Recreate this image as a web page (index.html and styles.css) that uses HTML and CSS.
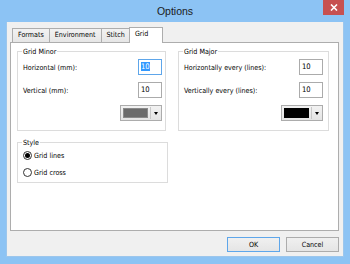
FILE: index.html
```html
<!DOCTYPE html>
<html>
<head>
<meta charset="utf-8">
<title>Options</title>
<link rel="stylesheet" href="styles.css">
</head>
<body>
<div class="window">
  <div class="titlebar">
    <span></span>
    <span class="title">Options</span>
    <span class="close"><svg width="8" height="7" viewBox="0 0 8 7"><path d="M1 0.5 L7 6.5 M7 0.5 L1 6.5" stroke="#fff" stroke-width="1.6"/></svg></span>
  </div>
  <div class="client">
    <div class="tabs">
      <div class="tab">Formats</div>
      <div class="tab">Environment</div>
      <div class="tab">Stitch</div>
      <div class="tab active">Grid</div>
    </div>
    <div class="panel">
      <div class="col">
        <fieldset class="group minor">
          <legend>Grid Minor</legend>
          <div class="body">
            <div class="row"><span class="label">Horizontal (mm):</span><span class="input focused"><span class="sel">10</span></span></div>
            <div class="row"><span class="label">Vertical (mm):</span><span class="input">10</span></div>
            <div class="row end"><span class="combo"><span class="swatch gray"></span><span class="sep"></span><span class="arrow"></span></span></div>
          </div>
        </fieldset>
        <fieldset class="group style">
          <legend>Style</legend>
          <div class="radios">
            <div class="radio-row"><span class="radio checked"></span><span>Grid lines</span></div>
            <div class="radio-row"><span class="radio"></span><span>Grid cross</span></div>
          </div>
        </fieldset>
      </div>
      <div class="col">
        <fieldset class="group major">
          <legend>Grid Major</legend>
          <div class="body">
            <div class="row"><span class="label">Horizontally every (lines):</span><span class="input">10</span></div>
            <div class="row"><span class="label">Vertically every (lines):</span><span class="input">10</span></div>
            <div class="row end"><span class="combo"><span class="swatch black"></span><span class="sep"></span><span class="arrow"></span></span></div>
          </div>
        </fieldset>
      </div>
    </div>
    <div class="buttons">
      <span class="btn default">OK</span>
      <span class="btn">Cancel</span>
    </div>
  </div>
</div>
</body>
</html>
```
FILE: styles.css
```css
* { box-sizing: border-box; }
html, body { margin: 0; padding: 0; }
body {
  width: 350px;
  height: 264px;
  overflow: hidden;
  font-family: "DejaVu Sans Condensed", "Liberation Sans", Arial, sans-serif;
  font-size: 7.1px;
  color: #000;
}
.window {
  width: 350px;
  height: 264px;
  background: #8cc3f4;
  padding: 0 6px 7px 6px;
  display: flex;
  flex-direction: column;
}
.titlebar {
  height: 22px;
  flex: none;
  display: grid;
  grid-template-columns: 1fr auto 1fr;
}
.title {
  font-family: "Liberation Sans", Arial, sans-serif;
  font-size: 10.5px;
  line-height: 23px;
  color: #1a1a1a;
}
.close {
  justify-self: end;
  align-self: start;
  width: 21px;
  height: 15px;
  background: #c75050;
  display: flex;
  align-items: center;
  justify-content: center;
}
.close svg { display: block; }
.client {
  flex: 1;
  background: #f0f0f0;
  border: 1px solid #9cc6ec;
  border-top: 0;
  padding: 5px 4px 4px 3px;
  display: flex;
  flex-direction: column;
}
.tabs {
  height: 15px;
  flex: none;
  display: flex;
  align-items: flex-end;
  padding-left: 2px;
}
.tab {
  height: 14px;
  line-height: 12px;
  padding: 0 5px;
  border: 1px solid #adadad;
  border-bottom: 0;
  margin-right: -1px;
  background: linear-gradient(#f2f2f2, #e6e6e6);
  white-space: nowrap;
}
.tab.active {
  height: 16px;
  line-height: 11px;
  margin-bottom: -1px;
  margin-left: -1px;
  padding: 0 14px 0 5px;
  background: #fff;
  position: relative;
  z-index: 1;
}
.panel {
  flex: 1;
  background: #fff;
  border: 1px solid #adadad;
  padding: 4px 0 0 6px;
  display: flex;
  align-items: flex-start;
  gap: 10px;
}
.col {
  width: 151px;
  display: flex;
  flex-direction: column;
  gap: 7px;
}
.group {
  margin: 0;
  border: 1px solid #dcdcdc;
  padding: 0 5px 9px 5px;
  min-width: 0;
}
.group legend {
  margin-left: -1px;
  padding: 0 1px;
  line-height: 9px;
}
.minor { width: 149px; padding-right: 3px; }
.style { width: 151px; padding-bottom: 4px; }
.major { width: 151px; }
.body {
  display: flex;
  flex-direction: column;
  gap: 7px;
  padding-top: 3px;
}
.row {
  display: flex;
  justify-content: space-between;
  align-items: center;
  height: 16px;
}
.row.end { justify-content: flex-end; }
.input {
  width: 24px;
  height: 16px;
  border: 1px solid #ababab;
  background: #fff;
  padding-left: 2px;
  line-height: 14px;
  font-size: 7.6px;
}
.input.focused { border-color: #5ea6ea; }
.sel { background: #3399ff; color: #fff; }
.combo {
  width: 42px;
  height: 16px;
  border: 1px solid #acacac;
  background: linear-gradient(#f2f2f2, #e4e4e4);
  display: flex;
  align-items: center;
  padding-left: 2px;
}
.swatch {
  width: 25px;
  height: 10px;
  border: 1px solid #8a8a8a;
}
.swatch.gray { background: #6b6b6b; }
.swatch.black { background: #000; border-color: #000; }
.sep {
  width: 1px;
  height: 12px;
  background: #c8c8c8;
  margin-left: 2px;
}
.arrow {
  margin-left: 3px;
  width: 0;
  height: 0;
  border-left: 2.5px solid transparent;
  border-right: 2.5px solid transparent;
  border-top: 3px solid #000;
}
.radios {
  display: flex;
  flex-direction: column;
  gap: 5px;
  padding-top: 2px;
}
.radio-row {
  display: flex;
  align-items: center;
  height: 12px;
  gap: 2px;
}
.radio {
  width: 9px;
  height: 9px;
  border-radius: 50%;
  border: 1px solid #333;
  background: #fff;
  display: flex;
  align-items: center;
  justify-content: center;
}
.radio.checked::after {
  content: "";
  width: 5px;
  height: 5px;
  border-radius: 50%;
  background: #000;
}
.buttons {
  flex: none;
  margin-top: 6px;
  display: flex;
  justify-content: flex-end;
  gap: 6px;
}
.btn {
  width: 53px;
  height: 15px;
  border: 1px solid #acacac;
  background: linear-gradient(#f0f0f0, #e5e5e5);
  text-align: center;
  line-height: 13px;
}
.btn.default { border-color: #5ea6ea; }
```
